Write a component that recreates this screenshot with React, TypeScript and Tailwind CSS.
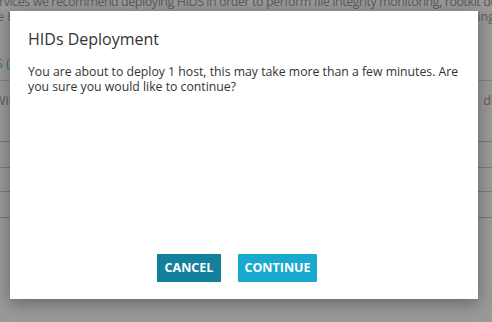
import React from "react";

export default function App() {
  return (
    <div
      className="relative w-[492px] h-[322px] overflow-hidden bg-white"
      style={{ fontFamily: '"Open Sans", "Noto Sans", sans-serif' }}
    >
      {/* background page */}
      <div className="flex flex-col text-[12.5px] text-[#999] leading-[15px]">
        <div className="mt-[-6px] whitespace-nowrap overflow-hidden">
          <span className="block ml-[-13px] tracking-[-0.45px]">
            services we recommend deploying HIDS in order to perform file integrity monitoring, rootkit detection
          </span>
        </div>
        <div className="whitespace-nowrap flex justify-between">
          <span className="ml-[-3px]">e HIDS</span>
          <span className="mr-[-3px]">ing</span>
        </div>
        <div className="h-[32px]" />
        <div className="whitespace-nowrap ml-[-4px] text-[#5bb9d6]">S (1)</div>
        <div className="h-[10px] border-b border-[#ddd]" />
        <div className="whitespace-nowrap flex justify-between mt-[12px]">
          <span className="ml-[-6px]">Will</span>
          <span className="mr-[-8px]">dic</span>
        </div>
        <div className="h-[34px] border-b border-[#ccc]" />
        <div className="h-[26px] border-b border-[#ccc]" />
        <div className="h-[24px] border-b border-[#ccc]" />
        <div className="h-[26px] border-b border-[#ccc]" />
      </div>

      {/* overlay */}
      <div className="absolute inset-0 bg-black/40" />

      {/* modal */}
      <div className="absolute left-[10px] top-[11px] w-[468px] h-[288px] bg-white shadow-[0_4px_16px_rgba(0,0,0,0.35)] flex flex-col px-[18px]">
        <h2 className="mt-[17px] text-[16px] leading-[22px] text-[#333]">HIDs Deployment</h2>
        <p className="mt-[14px] text-[12.25px] leading-[15px] text-[#333]">
          You are about to deploy 1 host, this may take more than a few minutes. Are you sure you would like to continue?
        </p>
        <div className="flex-1" />
        <div className="flex justify-center gap-[17px] mb-[17px] pr-[14px]">
          <button className="w-[64px] h-[28px] bg-[#14819c] text-white text-[12.5px] font-bold">CANCEL</button>
          <button className="w-[79px] h-[28px] bg-[#18aace] text-white text-[12.5px] font-bold rounded-[1px]">CONTINUE</button>
        </div>
      </div>
    </div>
  );
}
